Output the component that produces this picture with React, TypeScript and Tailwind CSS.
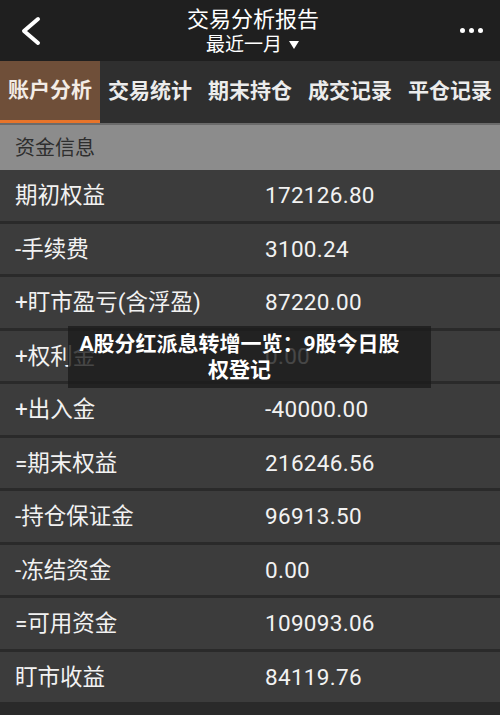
import React from 'react';

const rows: { label: string; value: string }[] = [
  { label: '期初权益', value: '172126.80' },
  { label: '-手续费', value: '3100.24' },
  { label: '+盯市盈亏(含浮盈)', value: '87220.00' },
  { label: '+权利金', value: '0.00' },
  { label: '+出入金', value: '-40000.00' },
  { label: '=期末权益', value: '216246.56' },
  { label: '-持仓保证金', value: '96913.50' },
  { label: '-冻结资金', value: '0.00' },
  { label: '=可用资金', value: '109093.06' },
  { label: '盯市收益', value: '84119.76' },
];

const tabs = ['账户分析', '交易统计', '期末持仓', '成交记录', '平仓记录'];

const font = { fontFamily: 'Roboto, "Noto Sans CJK SC", sans-serif' };

export default function App() {
  return (
    <div className="relative w-[500px] h-[715px] overflow-hidden bg-[#2a2a2a]" style={font}>
      {/* header */}
      <div className="h-[61px] bg-[#1f1f1f] flex items-center justify-between px-[16px]">
        <svg width="28" height="30" viewBox="0 0 28 30" className="ml-[2px]">
          <path d="M20 3 L6 15 L20 27" stroke="#ffffff" strokeWidth="4" fill="none" strokeLinecap="round" strokeLinejoin="round" />
        </svg>
        <div className="flex flex-col items-center text-white">
          <div className="text-[22px] leading-[26px] mt-[2px]">交易分析报告</div>
          <div className="text-[19px] leading-[24px] flex items-center gap-[6px]">
            最近一月
            <svg width="12" height="10" viewBox="0 0 12 10">
              <path d="M1 1 L11 1 L6 9 Z" fill="#ffffff" />
            </svg>
          </div>
        </div>
        <div className="flex gap-[4px] mr-[1px]">
          <span className="w-[5px] h-[5px] rounded-full bg-white" />
          <span className="w-[5px] h-[5px] rounded-full bg-white" />
          <span className="w-[5px] h-[5px] rounded-full bg-white" />
        </div>
      </div>

      {/* tabs */}
      <div className="flex h-[62px] bg-[#2f2f2f]">
        {tabs.map((t, i) => (
          <div
            key={t}
            className={`w-[100px] flex items-center justify-center text-[21px] font-bold ${
              i === 0 ? 'bg-[#6f4f39] text-[#f3ece6] border-b-[3px] border-[#e8742a]' : 'text-[#ececec]'
            }`}
          >
            {t}
          </div>
        ))}
      </div>
      <div className="h-[2px] bg-[#6b6b6b]" />

      {/* section header */}
      <div className="h-[45px] bg-[#8c8c8c] flex items-center px-[15px] text-[20px] text-[#2e2e2e]">
        资金信息
      </div>

      {/* rows */}
      {rows.map((r) => (
        <div key={r.label} className="h-[53.5px] bg-[#3c3c3c] border-b-[3px] border-[#2a2a2a] flex items-center pt-[2px] text-[22.5px] text-[#f2f2f2]">
          <div className="w-[265px] pl-[15px]">{r.label}</div>
          <div className="tracking-[0.3px]">{r.value}</div>
        </div>
      ))}

      {/* overlay */}
      <div className="absolute left-[68px] top-[326px] w-[363px] h-[62px] bg-[#1c1c1c]/80 flex items-center pl-[8px] pr-[28px]">
        <div className="w-full text-white font-bold text-[21px] leading-[26px] text-center">
          A股分红派息转增一览：9股今日股权登记
        </div>
      </div>
    </div>
  );
}
